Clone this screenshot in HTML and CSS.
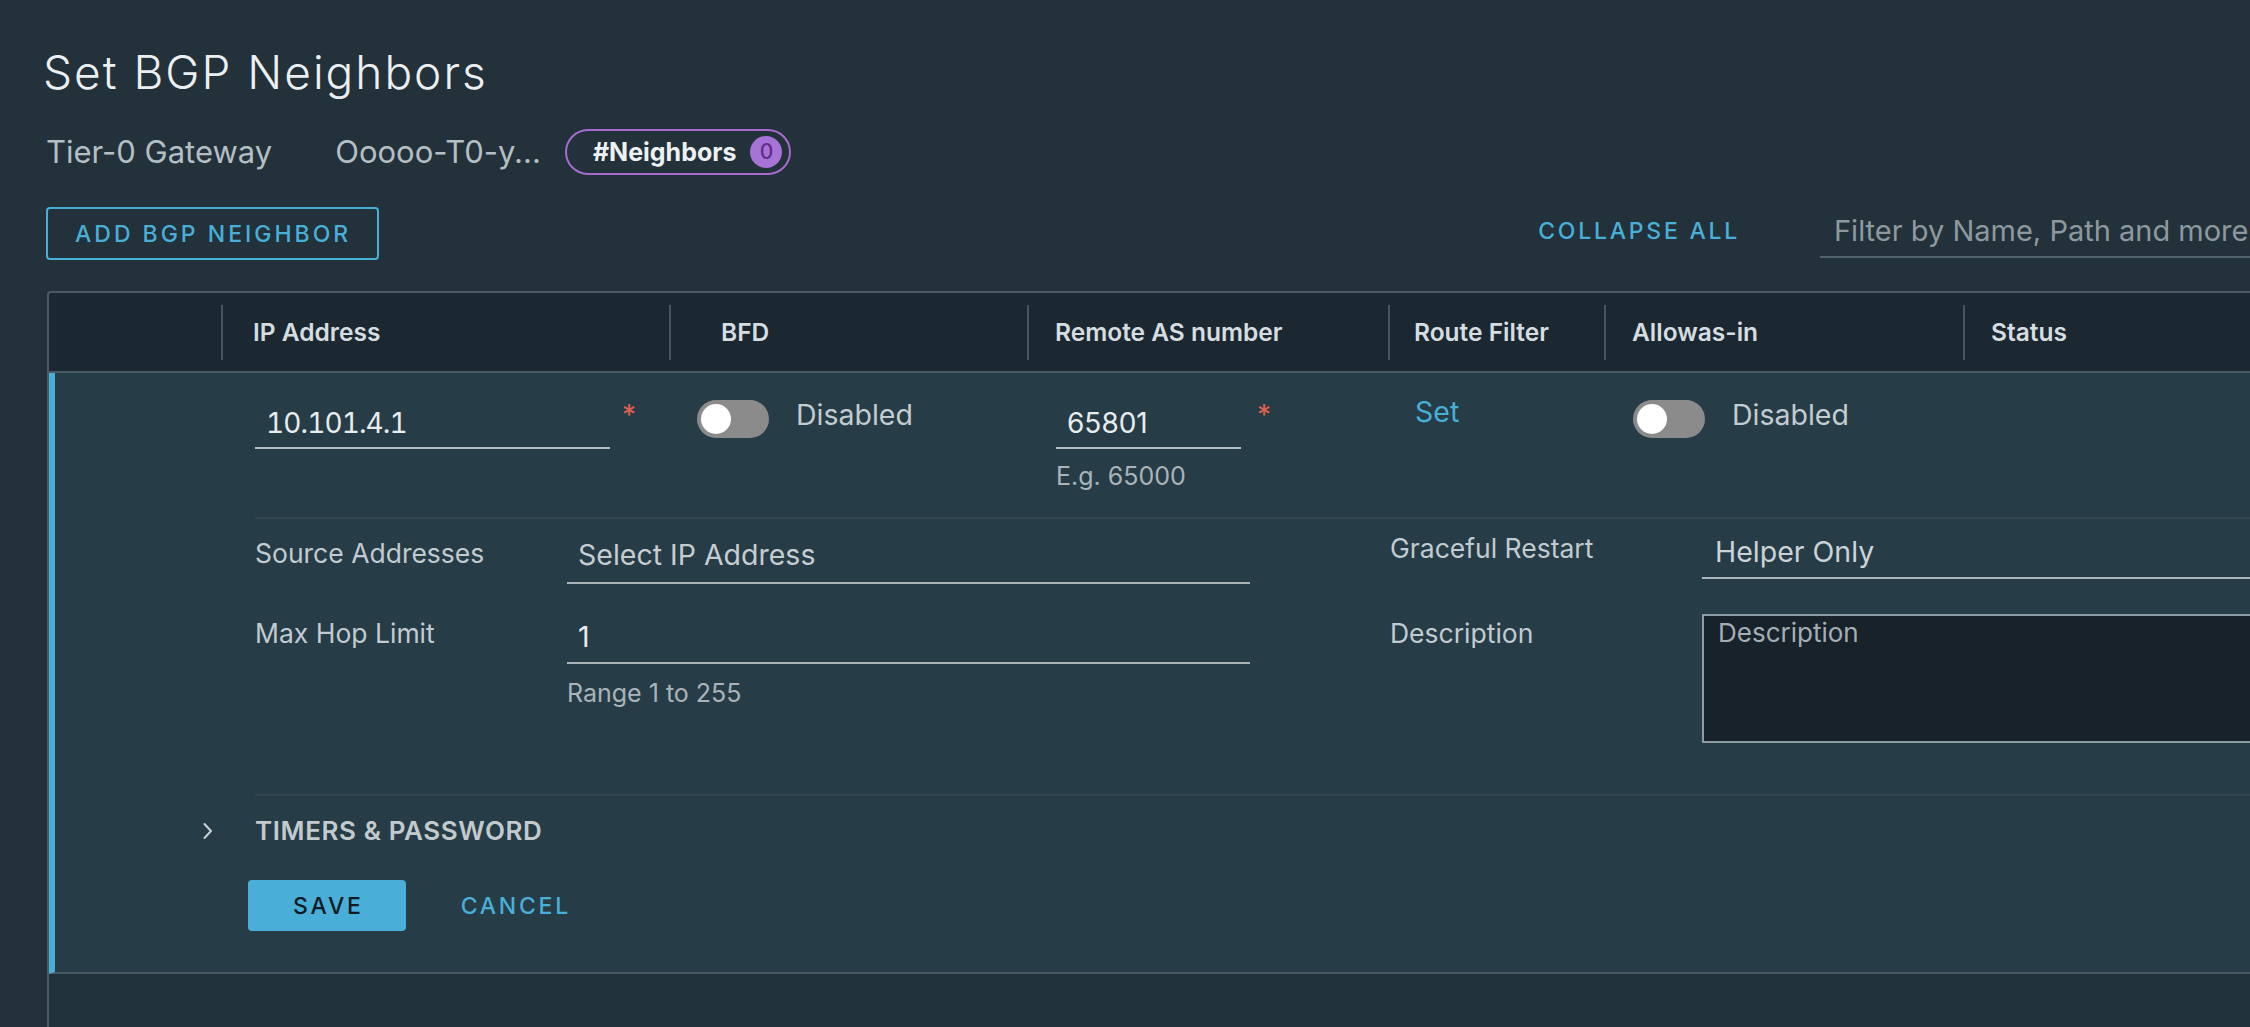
FILE: index.html
```html
<!DOCTYPE html>
<html lang="en">
<head>
<meta charset="utf-8">
<title>Set BGP Neighbors</title>
<link rel="stylesheet" href="styles.css">
</head>
<body>
<div class="page">
  <h1 class="title">Set BGP Neighbors</h1>
  <div class="context">
    <span class="ctx-label">Tier-0 Gateway</span>
    <span class="ctx-value">Ooooo-T0-y...</span>
    <span class="pill">#Neighbors<span class="pill-count">0</span></span>
  </div>
  <div class="toolbar">
    <button class="btn btn-outline">ADD BGP NEIGHBOR</button>
    <div class="toolbar-right">
      <button class="btn-link collapse">COLLAPSE ALL</button>
      <div class="filter">Filter by Name, Path and more</div>
    </div>
  </div>

  <div class="grid">
    <div class="head">
      <div class="hcell hcell-first"></div>
      <div class="hcell hc-ip">IP Address</div>
      <div class="hcell hc-bfd">BFD</div>
      <div class="hcell hc-as">Remote AS number</div>
      <div class="hcell hc-rf">Route Filter</div>
      <div class="hcell hc-aw">Allowas-in</div>
      <div class="hcell hc-st">Status</div>
    </div>

    <div class="row">
      <div class="row-main">
        <div class="cell"></div>
        <div class="cell cell-ip">
          <div class="input input-ip">10.101.4.1</div>
          <span class="req">*</span>
        </div>
        <div class="cell cell-bfd">
          <span class="toggle"><span class="knob"></span></span>
          <span class="toggle-label">Disabled</span>
        </div>
        <div class="cell cell-as">
          <div class="as-wrap">
            <div class="as-line">
              <div class="input input-as">65801</div>
              <span class="req req-as">*</span>
            </div>
            <div class="helper helper-as">E.g. 65000</div>
          </div>
        </div>
        <div class="cell cell-rf">
          <span class="link-set">Set</span>
        </div>
        <div class="cell cell-aw">
          <span class="toggle"><span class="knob"></span></span>
          <span class="toggle-label">Disabled</span>
        </div>
        <div class="cell"></div>
      </div>

      <div class="detail">
        <div class="label label-src">Source Addresses</div>
        <div class="input input-wide input-placeholder">Select IP Address</div>
        <div class="spacer"></div>
        <div class="label label-gr">Graceful Restart</div>
        <div class="input select-gr">Helper Only</div>

        <div class="label label-hop">Max Hop Limit</div>
        <div class="hop-wrap">
          <div class="input input-wide input-hop">1</div>
          <div class="helper helper-hop">Range 1 to 255</div>
        </div>
        <div class="spacer"></div>
        <div class="label label-desc">Description</div>
        <div class="textarea">Description</div>
      </div>

      <div class="timers">
        <svg class="chevron" width="12" height="20" viewBox="0 0 12 20" aria-hidden="true">
          <path d="M2.5 3 L9 10 L2.5 17" fill="none" stroke="#c9d1d5" stroke-width="2" stroke-linecap="round" stroke-linejoin="round"/>
        </svg>
        <span class="timers-label">TIMERS &amp; PASSWORD</span>
      </div>

      <div class="actions">
        <button class="btn btn-primary">SAVE</button>
        <button class="btn-link cancel">CANCEL</button>
      </div>
    </div>
    <div class="grid-fill"></div>
  </div>
</div>
</body>
</html>
```

FILE: styles.css
```css
* { box-sizing: border-box; }

html, body {
  margin: 0;
  padding: 0;
  background: #22313a;
  overflow: hidden;
}

body {
  width: 2250px;
  height: 1027px;
  font-family: Inter, "Noto Sans", "Liberation Sans", sans-serif;
  color: #e6eaec;
}

.page {
  width: 2420px;
  padding-top: 45px;
}

.title {
  margin: 0 0 0 43px;
  font-size: 46px;
  line-height: 54px;
  font-weight: 300;
  letter-spacing: 2px;
  color: #eceff1;
}

.context {
  display: flex;
  align-items: center;
  height: 46px;
  margin: 30px 0 0 46px;
  font-size: 31px;
  line-height: 40px;
  color: #b3bfc5;
}

.ctx-value {
  margin-left: 63px;
}

.pill {
  display: flex;
  align-items: center;
  height: 46px;
  margin-left: 24px;
  padding: 0 7px 0 26px;
  border: 2px solid #a56bd0;
  border-radius: 23px;
  font-size: 25px;
  font-weight: 700;
  color: #eef1f3;
}

.pill-count {
  display: flex;
  align-items: center;
  justify-content: center;
  width: 32px;
  height: 32px;
  margin-left: 14px;
  border-radius: 50%;
  background: #a873d6;
  color: #5e2f88;
  font-size: 21px;
  font-weight: 500;
}

.toolbar {
  display: flex;
  align-items: center;
  margin: 32px 0 0 46px;
}

.btn {
  font-family: Inter, "Noto Sans", sans-serif;
  font-size: 23px;
  font-weight: 500;
  letter-spacing: 0.12em;
  border-radius: 4px;
  cursor: pointer;
}

.btn-outline {
  height: 53px;
  padding: 0 26px 0 27px;
  border: 2px solid #49afd9;
  background: transparent;
  color: #49afd9;
  letter-spacing: 0.13em;
}

.btn-link {
  padding: 0;
  border: none;
  background: transparent;
  color: #49afd9;
  font-family: Inter, "Noto Sans", sans-serif;
  font-size: 23px;
  font-weight: 500;
  letter-spacing: 0.12em;
}

.toolbar-right {
  display: flex;
  align-items: center;
  margin-left: auto;
}

.collapse {
  margin-right: 80px;
  margin-top: -6px;
}

.filter {
  width: 600px;
  padding: 6px 14px 10px;
  line-height: 30px;
  font-size: 29px;
  color: #8d999f;
  white-space: nowrap;
  border-bottom: 2px solid #52626b;
}

/* grid */
.grid {
  margin: 31px 0 0 47px;
  border: 2px solid #4a5a64;
  border-right: none;
  border-bottom: none;
  border-radius: 4px 0 0 0;
}

.head {
  display: grid;
  grid-template-columns: 172px 448px 358px 361px 216px 359px 1fr;
  align-items: center;
  height: 80px;
  background: #1b2831;
  border-bottom: 2px solid #4a5a64;
  border-radius: 3px 0 0 0;
}

.hcell {
  display: flex;
  align-items: center;
  height: 55px;
  padding-left: 26px;
  border-left: 2px solid #46555e;
  font-size: 24.5px;
  font-weight: 600;
  color: #d6dde1;
  white-space: nowrap;
}

.hcell-first { border-left: none; }
.hc-ip { padding-left: 30px; }
.hc-bfd { padding-left: 50px; }
.hc-rf { padding-left: 24px; }

.row {
  background: #263c47;
  border-left: 6px solid #49afd9;
  border-bottom: 2px solid #4a5a64;
  padding: 27px 0 41px;
}

.row-main {
  display: grid;
  grid-template-columns: 166px 448px 358px 361px 216px 359px 1fr;
  align-items: start;
  padding-bottom: 26px;
}

.cell {
  display: flex;
  align-items: flex-start;
}

.cell-ip { padding-left: 34px; }
.cell-bfd { padding-left: 28px; }
.cell-as { padding-left: 29px; }
.cell-rf { padding-left: 27px; }
.cell-aw { padding-left: 29px; }

.input {
  padding: 8px 11px 9px;
  line-height: 30px;
  font-size: 28px;
  color: #e8eced;
  border-bottom: 2px solid #b4bfc5;
  white-space: nowrap;
}

.input-ip {
  width: 355px;
  font-variant-numeric: tabular-nums;
  letter-spacing: -0.9px;
}
.input-as { width: 185px; }

.req {
  font-size: 28px;
  line-height: 24px;
  color: #e0604e;
  margin-left: 12px;
  margin-top: 3px;
}

.req-as { margin-left: 16px; }

.as-line {
  display: flex;
  align-items: flex-start;
}

.helper {
  font-size: 25px;
  line-height: 30px;
  color: #a9b4ba;
}

.helper-as { margin-top: 12px; }

.toggle {
  display: flex;
  align-items: center;
  width: 72px;
  height: 38px;
  padding: 0 4px;
  border-radius: 19px;
  background: #8b8b8b;
  flex-shrink: 0;
}

.knob {
  width: 30px;
  height: 30px;
  border-radius: 50%;
  background: #ffffff;
}

.toggle-label {
  margin-left: 27px;
  font-size: 28.5px;
  line-height: 30px;
  color: #c3ccd1;
}

.link-set {
  font-size: 28.5px;
  line-height: 24px;
  color: #49afd9;
}

/* detail */
.detail {
  display: grid;
  grid-template-columns: 312px 683px 140px 312px 1fr;
  row-gap: 30px;
  align-items: start;
  margin-left: 200px;
  padding: 13px 0 51px;
  border-top: 2px solid #31464f;
}

.label {
  font-size: 26.5px;
  line-height: 30px;
  color: #c2cbd0;
  white-space: nowrap;
}

.label-src { margin-top: 6px; }
.label-gr { margin-top: 1px; }
.label-hop { margin-top: 4px; }
.label-desc { margin-top: 4px; }

.input-wide {
  padding: 8px 11px 12px;
  border-bottom-color: #aab5bb;
  font-size: 28.5px;
}

.input-placeholder { color: #c6cdd1; }

.select-gr {
  padding: 5px 13px 10px;
  border-bottom-color: #aab5bb;
  color: #ccd3d7;
  font-size: 28.5px;
}

.input-hop {
  padding: 8px 11px 10px;
}

.helper-hop { margin-top: 14px; }

.textarea {
  height: 129px;
  padding: 2px 14px;
  line-height: 30px;
  font-size: 26px;
  color: #a4aeb4;
  background: #17222a;
  border: 2px solid #8e9ba2;
  border-right: none;
}

/* timers */
.timers {
  display: flex;
  align-items: center;
  margin-left: 200px;
  padding-top: 20px;
  border-top: 2px solid #31464f;
}

.chevron {
  margin-left: -53px;
  margin-right: 41px;
  flex-shrink: 0;
}

.timers-label {
  font-size: 26px;
  line-height: 30px;
  font-weight: 600;
  letter-spacing: 0.6px;
  color: #c2cace;
}

.actions {
  display: flex;
  align-items: center;
  margin: 34px 0 0 193px;
}

.btn-primary {
  height: 51px;
  padding: 0 42px 0 45px;
  border: none;
  background: #49afd9;
  color: #0e1b22;
}

.cancel {
  margin-left: 55px;
}

.grid-fill {
  height: 80px;
  background: #22323b;
}
```
